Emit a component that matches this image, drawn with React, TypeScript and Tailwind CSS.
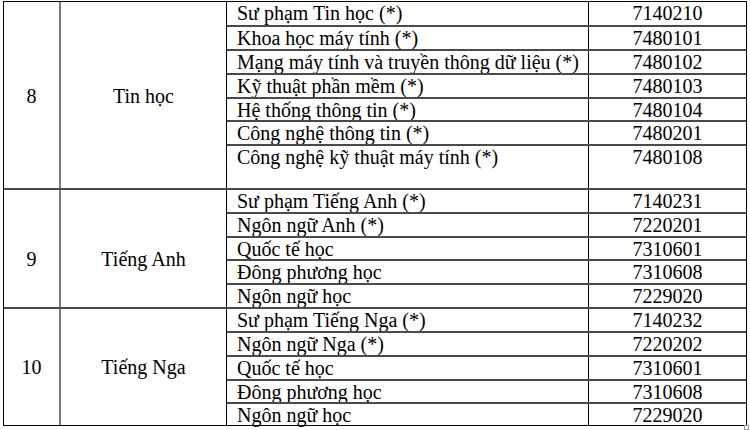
import React from 'react'

type Row = { name: string; code: string; h: string }
type Group = { no: string; subject: string; labelPad: string; rows: Row[] }

const GROUPS: Group[] = [
  {
    no: '8',
    subject: 'Tin học',
    labelPad: 'pt-[2px]',
    rows: [
      { name: 'Sư phạm Tin học (*)', code: '7140210', h: 'h-[23px]' },
      { name: 'Khoa học máy tính (*)', code: '7480101', h: 'h-[24px]' },
      { name: 'Mạng máy tính và truyền thông dữ liệu (*)', code: '7480102', h: 'h-[24px]' },
      { name: 'Kỹ thuật phần mềm (*)', code: '7480103', h: 'h-[24px]' },
      { name: 'Hệ thống thông tin (*)', code: '7480104', h: 'h-[23px]' },
      { name: 'Công nghệ thông tin (*)', code: '7480201', h: 'h-[24px]' },
      { name: 'Công nghệ kỹ thuật máy tính (*)', code: '7480108', h: 'h-[44px]' },
    ],
  },
  {
    no: '9',
    subject: 'Tiếng Anh',
    labelPad: 'pt-[20px]',
    rows: [
      { name: 'Sư phạm Tiếng Anh (*)', code: '7140231', h: 'h-[22px]' },
      { name: 'Ngôn ngữ Anh (*)', code: '7220201', h: 'h-[24px]' },
      { name: 'Quốc tế học', code: '7310601', h: 'h-[23px]' },
      { name: 'Đông phương học', code: '7310608', h: 'h-[24px]' },
      { name: 'Ngôn ngữ học', code: '7229020', h: 'h-[24px]' },
    ],
  },
  {
    no: '10',
    subject: 'Tiếng Nga',
    labelPad: 'pt-[0px]',
    rows: [
      { name: 'Sư phạm Tiếng Nga (*)', code: '7140232', h: 'h-[22px]' },
      { name: 'Ngôn ngữ Nga (*)', code: '7220202', h: 'h-[24px]' },
      { name: 'Quốc tế học', code: '7310601', h: 'h-[24px]' },
      { name: 'Đông phương học', code: '7310608', h: 'h-[23px]' },
      { name: 'Ngôn ngữ học', code: '7229020', h: 'h-[23px]' },
    ],
  },
]

function GroupBlock({ group, first }: { group: Group; first: boolean }) {
  return (
    <div className={first ? 'flex' : 'flex border-t-2 border-[#4a4a4a]'}>
      <div className={`w-[57px] shrink-0 border-r-2 border-[#7a7a7a] flex items-center justify-center ${group.labelPad}`}>
        {group.no}
      </div>
      <div className={`w-[166px] shrink-0 border-r border-black flex items-center justify-center ${group.labelPad}`}>
        {group.subject}
      </div>
      <div className="flex-1 flex flex-col">
        {group.rows.map((r, i) => (
          <div
            key={r.code + i}
            className={`flex ${r.h} ${i === 0 ? '' : 'border-t-2 border-[#4a4a4a]'}`}
          >
            <div className="w-[362px] shrink-0 border-r border-black pl-[10px] leading-[22px] whitespace-nowrap">
              {r.name}
            </div>
            <div className="flex-1 text-center leading-[22px]">{r.code}</div>
          </div>
        ))}
      </div>
    </div>
  )
}

export default function App() {
  return (
    <div
      className="relative w-[750px] h-[430px] bg-white text-black text-[20px]"
      style={{ fontFamily: '"Liberation Serif", "Times New Roman", serif' }}
    >
      <div className="absolute left-[3px] top-[1px] w-[744px] border border-black flex flex-col">
        {GROUPS.map((g, i) => (
          <GroupBlock key={g.no} group={g} first={i === 0} />
        ))}
      </div>
      {/* table resize handle */}
      <div className="absolute left-[744px] top-[425px] w-[5px] h-[5px] border border-[#9a9a9a] bg-white" />
    </div>
  )
}
